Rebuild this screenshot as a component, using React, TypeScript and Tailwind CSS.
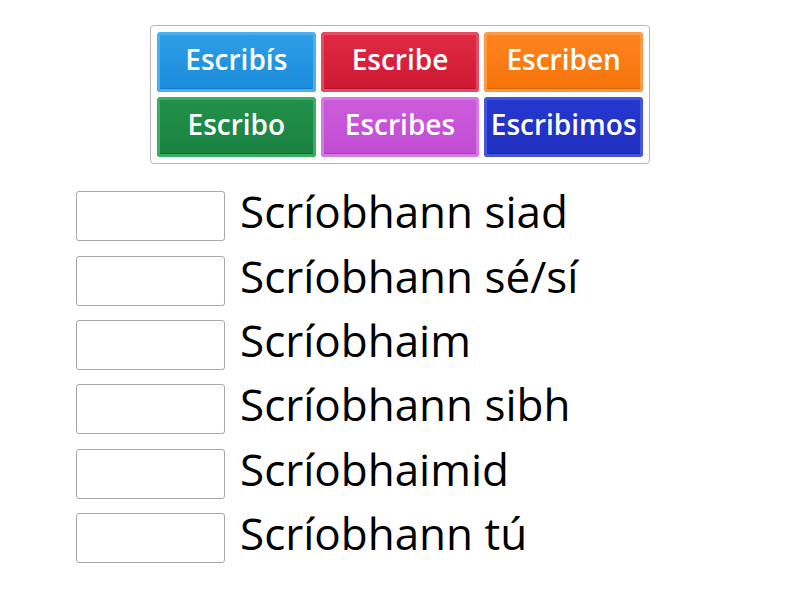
import React from "react";

const buttons = [
  { label: "Escribís", bg: "bg-[linear-gradient(#2e9ee8,#1a8bdb)]", rim: "shadow-[inset_0_0_0_3px_#4db0ee,inset_0_-4px_0_#1279c4]" },
  { label: "Escribe", bg: "bg-[linear-gradient(#e22a44,#cc1831)]", rim: "shadow-[inset_0_0_0_3px_#e64a60,inset_0_-4px_0_#b3122a]" },
  { label: "Escriben", bg: "bg-[linear-gradient(#ff8420,#f57308)]", rim: "shadow-[inset_0_0_0_3px_#ff9a44,inset_0_-4px_0_#db6205]" },
  { label: "Escribo", bg: "bg-[linear-gradient(#22914b,#1a8040)]", rim: "shadow-[inset_0_0_0_3px_#35b25f,inset_0_-4px_0_#136a33]" },
  { label: "Escribes", bg: "bg-[linear-gradient(#cd5cdc,#c04bd2)]", rim: "shadow-[inset_0_0_0_3px_#d67ae3,inset_0_-4px_0_#a93bbb]" },
  { label: "Escribimos", bg: "bg-[linear-gradient(#2538cf,#1f2fc0)]", rim: "shadow-[inset_0_0_0_3px_#4656db,inset_0_-4px_0_#1a27a6]" },
];

const rows = [
  "Scríobhann siad",
  "Scríobhann sé/sí",
  "Scríobhaim",
  "Scríobhann sibh",
  "Scríobhaimid",
  "Scríobhann tú",
];

export default function App() {
  return (
    <div className="w-[800px] h-[600px] bg-white overflow-hidden" style={{ fontFamily: '"Open Sans", sans-serif' }}>
      <div className="pt-[25px] flex justify-center">
        <div className="w-[500px] border border-[#b5b5b5] rounded-[4px] p-[6px] grid grid-cols-3 gap-x-[5px] gap-y-[5px]">
          {buttons.map((b) => (
            <div
              key={b.label}
              className={`h-[60px] rounded-[4px] flex items-center justify-center text-white text-[28px] font-semibold ${b.bg} ${b.rim}`}
            >
              <span className="-mt-[6px]">{b.label}</span>
            </div>
          ))}
        </div>
      </div>
      <div className="mt-[20px] pl-[76px] flex flex-col">
        {rows.map((r) => (
          <div key={r} className="h-[64.4px] flex items-center">
            <div className="w-[149px] h-[50px] border border-[#a8a8a8] rounded-[3px] bg-white" />
            <div className="ml-[15px] text-[44px] text-black leading-none -mt-[10px]">{r}</div>
          </div>
        ))}
      </div>
    </div>
  );
}
